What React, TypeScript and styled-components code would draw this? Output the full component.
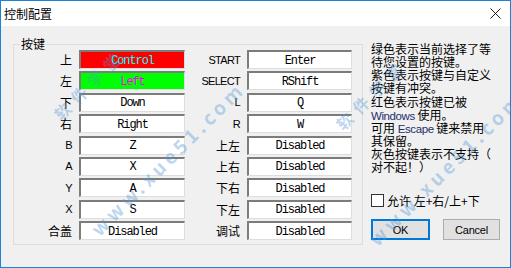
import React from "react";
import styled, { createGlobalStyle } from "styled-components";

const GlobalStyle = createGlobalStyle`
  html, body {
    margin: 0;
    padding: 0;
    background: #f0f0f0;
  }
  body {
    font-family: "Noto Sans CJK SC", "Liberation Sans", sans-serif;
    color: #000;
  }
`;

const latin = `"Liberation Sans", Arial, sans-serif`;

const Window = styled.div`
  position: relative;
  width: 511px;
  height: 268px;
  box-sizing: border-box;
  border: 1px solid #1883d7;
  background: #f0f0f0;
  overflow: hidden;
  display: flex;
  flex-direction: column;
`;

const TitleBar = styled.div`
  flex: none;
  height: 25px;
  background: #fff;
  display: flex;
  align-items: center;
  justify-content: space-between;
  padding: 0 9px 0 3px;
`;

const Title = styled.span`
  font-size: 12px;
  line-height: 14px;
`;

const Body = styled.div`
  flex: 1;
  display: flex;
  align-items: flex-start;
  padding-left: 12px;
`;

const Group = styled.div`
  position: relative;
  margin-top: 18px;
  width: 350px;
  height: 201px;
  box-sizing: border-box;
  border: 1px solid #dcdcdc;
  padding-top: 5px;
`;

const Legend = styled.span`
  position: absolute;
  top: -7px;
  left: 6px;
  padding: 0 1px;
  background: #f0f0f0;
  font-size: 12px;
  line-height: 12px;
`;

const KeyGrid = styled.div`
  display: grid;
  grid-template-columns: 58px 106px 48px 105px;
  grid-auto-rows: 19px;
  column-gap: 7px;
  row-gap: 2.375px;
`;

const KeyLabel = styled.div<{ $latin?: boolean }>`
  display: flex;
  align-items: center;
  justify-content: flex-end;
  font-family: ${(p) => (p.$latin ? latin : `"Noto Sans CJK SC", sans-serif`)};
  font-size: ${(p) => (p.$latin ? "11px" : "12px")};
  letter-spacing: ${(p) => (p.$latin ? "-0.7px" : "0")};
  white-space: nowrap;
`;

const KeyBox = styled.div<{ $bg: string; $fg: string }>`
  box-sizing: border-box;
  display: flex;
  align-items: center;
  justify-content: center;
  background: ${(p) => p.$bg};
  color: ${(p) => p.$fg};
  border-top: 2px solid #7c7c7c;
  border-left: 2px solid #7c7c7c;
  border-right: 1px solid #dedede;
  border-bottom: 1px solid #dedede;
  font-family: "Liberation Mono", "Courier New", monospace;
  font-size: 12px;
  letter-spacing: -1.1px;
  padding-top: 1px;
`;

const Panel = styled.div`
  margin-left: 8px;
  margin-top: 16px;
  display: flex;
  flex-direction: column;
`;

const Line = styled.div`
  height: 13.15px;
  font-size: 12px;
  line-height: 13.15px;
  white-space: nowrap;
`;

const Word = styled.span`
  font-family: ${latin};
  font-size: 11.5px;
  letter-spacing: -0.4px;
  color: #1d2f6e;
`;

const CheckRow = styled.label`
  margin-top: 21px;
  display: flex;
  align-items: center;
  gap: 3px;
  height: 13px;
  font-size: 12px;
  line-height: 13px;
`;

const CheckBox = styled.span`
  width: 13px;
  height: 13px;
  box-sizing: border-box;
  border: 1px solid #333;
  background: #fff;
`;

const Buttons = styled.div`
  margin-top: 12px;
  display: flex;
  gap: 13px;
`;

const Button = styled.button<{ $primary?: boolean; $w: number }>`
  width: ${(p) => p.$w}px;
  height: 21px;
  box-sizing: border-box;
  margin: 0;
  padding: 0;
  background: #e1e1e1;
  border: ${(p) => (p.$primary ? "2px solid #0078d7" : "1px solid #adadad")};
  font-family: ${latin};
  font-size: 11px;
  letter-spacing: -0.2px;
  color: #000;
`;

const Mark = styled.div<{ $x: number; $y: number; $size: number; $gap: number }>`
  position: absolute;
  left: ${(p) => p.$x}px;
  top: ${(p) => p.$y}px;
  transform: translate(-50%, -50%) rotate(-45deg);
  font-family: "Noto Sans CJK SC", "Liberation Sans", sans-serif;
  font-weight: bold;
  font-size: ${(p) => p.$size}px;
  letter-spacing: ${(p) => p.$gap}px;
  color: rgba(80, 150, 215, 0.38);
  white-space: nowrap;
  pointer-events: none;
`;

const keys: [string, string, boolean, string, string, boolean][] = [
  ["上", "Control", false, "START", "Enter", true],
  ["左", "Left", false, "SELECT", "RShift", true],
  ["下", "Down", false, "L", "Q", true],
  ["右", "Right", false, "R", "W", true],
  ["B", "Z", true, "上左", "Disabled", false],
  ["A", "X", true, "上右", "Disabled", false],
  ["Y", "A", true, "下右", "Disabled", false],
  ["X", "S", true, "下左", "Disabled", false],
  ["合盖", "Disabled", false, "调试", "Disabled", false],
];

const colorsFor = (value: string) => {
  if (value === "Control") return { bg: "#ff0000", fg: "#00ffff" };
  if (value === "Left") return { bg: "#00ff00", fg: "#ff00ff" };
  return { bg: "#ffffff", fg: "#000000" };
};

// watermark copies, centre points
const marks = [
  { x: 88, y: 83, size: 16, gap: 7, text: "软件学堂" },
  { x: 166, y: 157, size: 19, gap: 4, text: "www.xue51.com" },
  { x: 370, y: 93, size: 16, gap: 7, text: "软件学堂" },
  { x: 444, y: 167, size: 19, gap: 4, text: "www.xue51.com" },
];

const App: React.FC = () => {
  return (
    <>
      <GlobalStyle />
      <Window>
        <TitleBar>
          <Title>控制配置</Title>
          <svg width="11" height="11" viewBox="0 0 11 11">
            <path d="M0.5 0.5 L10.5 10.5 M10.5 0.5 L0.5 10.5" stroke="#000" strokeWidth="0.9" />
          </svg>
        </TitleBar>
        <Body>
          <Group>
            <Legend>按键</Legend>
            <KeyGrid>
              {keys.map(([l1, v1, lat1, l2, v2, lat2]) => {
                const c1 = colorsFor(v1);
                const c2 = colorsFor(v2);
                return (
                  <React.Fragment key={l1 + l2}>
                    <KeyLabel $latin={lat1}>{l1}</KeyLabel>
                    <KeyBox $bg={c1.bg} $fg={c1.fg}>{v1}</KeyBox>
                    <KeyLabel $latin={lat2}>{l2}</KeyLabel>
                    <KeyBox $bg={c2.bg} $fg={c2.fg}>{v2}</KeyBox>
                  </React.Fragment>
                );
              })}
            </KeyGrid>
          </Group>
          <Panel>
            <Line>绿色表示当前选择了等</Line>
            <Line>待您设置的按键。</Line>
            <Line>紫色表示按键与自定义</Line>
            <Line>按键有冲突。</Line>
            <Line>红色表示按键已被</Line>
            <Line>
              <Word>Windows</Word> 使用。
            </Line>
            <Line>
              可用 <Word>Escape</Word> 键来禁用
            </Line>
            <Line>其保留。</Line>
            <Line>灰色按键表示不支持（</Line>
            <Line>对不起！）</Line>
            <CheckRow>
              <CheckBox />
              允许 左+右/上+下
            </CheckRow>
            <Buttons>
              <Button $primary $w={59}>OK</Button>
              <Button $w={57}>Cancel</Button>
            </Buttons>
          </Panel>
        </Body>
        {marks.map((m, i) => (
          <Mark key={i} $x={m.x} $y={m.y} $size={m.size} $gap={m.gap}>
            {m.text}
          </Mark>
        ))}
      </Window>
    </>
  );
};

export default App;
